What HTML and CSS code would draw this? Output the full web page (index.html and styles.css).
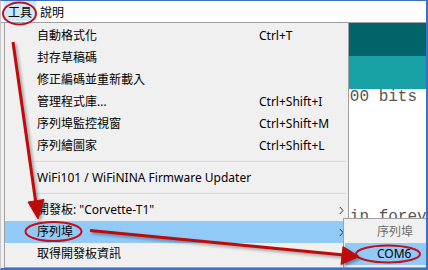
FILE: index.html
```html
<!DOCTYPE html>
<html lang="zh-Hant">
<head>
    <meta charset="UTF-8">
    <meta name="viewport" content="width=device-width, initial-scale=1.0">
    <title>Arduino 工具選單</title>
    <link rel="stylesheet" href="styles.css">
</head>
<body>
    <div class="window">
        <div class="menubar">
            <span class="menubar-item active">工具</span>
            <span class="menubar-item">說明</span>
        </div>
        <div class="editor">
            <div class="toolbar"></div>
            <div class="tabs"></div>
<pre class="code">  // initialize serial port at 9600 bits
  Serial.begin(9600);
  pinMode(2, INPUT);
}


  // loop: runs over and over again forever:</pre>
        </div>

        <div class="menu">
            <div class="menu-item"><span>自動格式化</span><span>Ctrl+T</span></div>
            <div class="menu-item"><span>封存草稿碼</span></div>
            <div class="menu-item"><span>修正編碼並重新載入</span></div>
            <div class="menu-item"><span>管理程式庫...</span><span>Ctrl+Shift+I</span></div>
            <div class="menu-item"><span>序列埠監控視窗</span><span>Ctrl+Shift+M</span></div>
            <div class="menu-item"><span>序列繪圖家</span><span>Ctrl+Shift+L</span></div>
            <div class="menu-sep"></div>
            <div class="menu-item"><span class="wide">WiFi101 / WiFiNINA Firmware Updater</span></div>
            <div class="menu-sep"></div>
            <div class="menu-item"><span>開發板: "Corvette-T1"</span><span></span>
                <svg class="chevron" width="5" height="9" viewBox="0 0 5 9"><polyline points="0.8,1 4,4.5 0.8,8"/></svg>
            </div>
            <div class="menu-item selected"><span>序列埠</span><span></span>
                <svg class="chevron" width="5" height="9" viewBox="0 0 5 9"><polyline points="0.8,1 4,4.5 0.8,8"/></svg>
            </div>
            <div class="menu-item"><span>取得開發板資訊</span></div>
        </div>

        <div class="submenu">
            <div class="sub-item disabled">序列埠</div>
            <div class="sub-item selected">COM6</div>
        </div>

        <svg class="marks" width="428" height="270" viewBox="0 0 428 270">
            <g class="rings">
                <ellipse cx="19.5" cy="13.5" rx="16.5" ry="11"/>
                <ellipse cx="53.5" cy="231.5" rx="28" ry="9.5"/>
                <ellipse cx="388" cy="254" rx="32" ry="8.5"/>
            </g>
            <g class="arrow">
                <line x1="13" y1="42" x2="36" y2="204"/>
                <polygon points="38,219 28,202 44,199.5"/>
                <line x1="90" y1="230.5" x2="344" y2="255"/>
                <polygon points="359,256.5 343,246.5 341,264.5"/>
            </g>
        </svg>
    </div>
</body>
</html>
```

FILE: styles.css
```css
*{
    box-sizing: border-box;
}
body {
    margin: 0;
    padding: 0;
    background-color: #fff;
    font-family: "Noto Sans", "Noto Sans CJK TC", sans-serif;
    font-size: 12px;
    color: #000;
}
.window {
    width: 428px;
    height: 270px;
    position: relative;
    overflow: hidden;
    background-color: #f0f0f0;
    border: 1px solid #3d6fc4;
    border-right-width: 2px;
    border-bottom-width: 2px;
    border-left-color: #c8c8c8;
}

/* menu bar */
.menubar {
    height: 22px;
    background-color: #fff;
    border-bottom: 1px solid #a0a0a0;
    display: flex;
    padding-left: 3px;
}
.menubar-item {
    height: 20px;
    padding: 2px 3px 0;
    line-height: 18px;
    border: 1px solid transparent;
}
.menubar-item.active {
    background-color: #cce8ff;
    border-color: #cce8ff;
}

/* editor behind the menu */
.editor {
    margin-left: 3px;
    background-color: #fff;
    height: 245px;
}
.toolbar {
    height: 33px;
    background-color: #006468;
    position: relative;
    z-index: 1;
}
.tabs {
    height: 33px;
    background-color: #17a1a5;
    position: relative;
    z-index: 1;
}
.code {
    margin: -2px 0 0;
    padding-left: 29px;
    font-family: "Liberation Mono", monospace;
    font-size: 16px;
    line-height: 20px;
    color: #555;
}

/* drop down */
.menu {
    position: absolute;
    z-index: 2;
    left: 3px;
    top: 21px;
    width: 345px;
    background-color: #f0f0f0;
    border: 1px solid #a0a0a0;
    padding: 2px 0;
}
.menu-item {
    display: grid;
    grid-template-columns: 222px 1fr 8px;
    align-items: center;
    height: 22px;
    line-height: 22px;
    padding: 0 4px 0 32px;
    white-space: nowrap;
}
.menu-item .wide {
    grid-column: 1 / 3;
}
.menu-item.selected {
    background-color: #91c9f7;
}
.chevron {
    justify-self: end;
    fill: none;
    stroke: #333;
    stroke-width: 1;
}
.menu-sep {
    height: 1px;
    margin: 4px 2px 5px 28px;
    background-color: #d7d7d7;
}

.submenu {
    position: absolute;
    z-index: 2;
    left: 342px;
    top: 217px;
    width: 100px;
    background-color: #f0f0f0;
    border: 1px solid #a0a0a0;
    padding: 2px 0;
}
.sub-item {
    height: 22px;
    line-height: 22px;
    margin: 0 1px;
    padding-left: 32px;
}
.sub-item.disabled {
    color: #6d6d6d;
}
.sub-item.selected {
    background-color: #91c9f7;
}

/* red notes drawn on top */
.marks {
    position: absolute;
    z-index: 3;
    left: -1px;
    top: -1px;
    pointer-events: none;
}
.rings {
    fill: none;
    stroke: #c3101a;
    stroke-width: 2;
}
.arrow {
    stroke: #bf0a0a;
    stroke-width: 3;
    fill: #bf0a0a;
    filter: drop-shadow(2px 2px 1.5px rgba(0, 0, 0, 0.35));
}
.arrow polygon {
    stroke-width: 1;
}
```
